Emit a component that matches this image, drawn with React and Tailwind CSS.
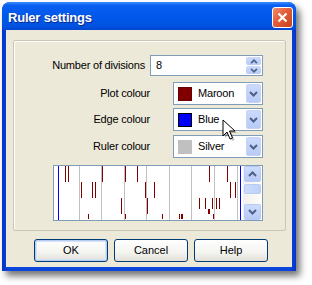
import React from 'react'

// dropdown / spinner arrow glyphs in the XP style
function Chevron({ up = false, w = 9, h = 6 }) {
  return (
    <svg width={w} height={h} viewBox="0 0 9 6">
      <path
        d={up ? 'M1 5 L4.5 1.5 L8 5' : 'M1 1 L4.5 4.5 L8 1'}
        fill="none"
        stroke="#4d6185"
        strokeWidth="2"
      />
    </svg>
  )
}

function ColourCombo({ swatch, swatchBorder, name }) {
  return (
    <div className="w-[90px] h-[23px] bg-white border border-[#7f9db9] flex items-center p-[1px]">
      <div className={`ml-[3px] w-[14px] h-[14px] ${swatch} ${swatchBorder}`} />
      <span className="ml-[6px] flex-1 text-[11px] tracking-[-0.2px] text-black">{name}</span>
      <div className="w-[15px] h-full rounded-[2px] border border-[#c4d3f6] bg-[linear-gradient(to_bottom,#cbdafc,#b8cbf7)] flex items-center justify-center">
        <Chevron />
      </div>
    </div>
  )
}

// the ruler preview: division lines and plotted marks
function RulerPreview() {
  const grey = [25, 47, 70, 92, 115, 137, 160, 183]
  const marks = [
    // row 1
    [11, 0, 16], [14, 0, 16], [48, 0, 16], [71, 0, 16], [83, 0, 16], [155, 0, 16], [173, 0, 16],
    // row 2
    [27, 16, 16], [38, 16, 16], [41, 16, 16], [91, 16, 16], [100, 16, 16], [176, 16, 16], [181, 16, 16],
    // row 3
    [67, 32, 16], [93, 32, 16], [145, 32, 11], [151, 32, 11], [158, 32, 11], [162, 32, 11], [165, 32, 11],
    // row 4
    [34, 48, 5], [71, 48, 5], [108, 48, 5], [125, 48, 5], [127, 48, 5], [128, 48, 5], [159, 48, 5],
  ]
  return (
    <svg width="189" height="54" viewBox="0 0 189 54" shapeRendering="crispEdges">
      <rect x="0" y="0" width="189" height="54" fill="#fff" />
      {grey.map((x) => (
        <rect key={x} x={x} y="0" width="1" height="54" fill="#c0c0c0" />
      ))}
      <rect x="4" y="0" width="1" height="54" fill="#0000ff" />
      <rect x="186" y="0" width="1" height="54" fill="#0000ff" />
      {marks.map(([x, y, h], i) => (
        <rect key={i} x={x} y={y} width="1" height={h} fill="#800000" />
      ))}
      <rect x="154" y="43" width="2" height="5" fill="#800000" />
    </svg>
  )
}

function XpButton({ children, isDefault }) {
  return (
    <button
      className={`w-[74px] h-[23px] rounded-[3px] border border-[#003c74] bg-[linear-gradient(to_bottom,#ffffff,#f3f3ef_60%,#e2e0d8)] text-[11px] text-black ${
        isDefault ? 'shadow-[inset_0_0_0_1px_#b7cef2,inset_0_0_0_2px_#d4e3f8]' : ''
      }`}
    >
      {children}
    </button>
  )
}

export default function App() {
  return (
    <div className="relative w-[312px] h-[285px] bg-white pt-[2px] pl-[2px] font-['Liberation_Sans',Arial,sans-serif] overflow-hidden">
      {/* Window */}
      <div className="w-[294px] h-[269px] flex flex-col rounded-t-[8px] bg-[#0a3fd0] shadow-[4px_5px_7px_rgba(0,0,0,0.55)]">
        {/* Title bar */}
        <div className="h-[28px] rounded-t-[8px] flex items-center justify-between pl-[6px] pr-[3px] bg-[linear-gradient(to_bottom,#3b8eff,#0a5ff0_12%,#0058ea_50%,#0053e2_85%,#0046cf)]">
          <span className="mt-[3px] text-[13px] font-bold tracking-[-0.2px] text-white [text-shadow:1px_1px_0_#0b2a8a]">
            Ruler settings
          </span>
          <div className="mt-[3px] w-[21px] h-[21px] rounded-[3px] border border-white bg-[linear-gradient(135deg,#f08d70,#e25d38_45%,#c8401c)] flex items-center justify-center">
            <svg width="11" height="11" viewBox="0 0 11 11">
              <path d="M1.5 1.5 L9.5 9.5 M9.5 1.5 L1.5 9.5" stroke="#fff" strokeWidth="2.2" />
            </svg>
          </div>
        </div>

        {/* Client area inside frame */}
        <div className="flex-1 px-[4px] pb-[4px] bg-[linear-gradient(to_right,#0832c8,#0a45dc_2%,#0a45dc_98%,#0832c8)]">
          <div className="h-full bg-[#ece9d8] pt-[10px] border-b-[0px]">
            {/* Group box */}
            <div className="ml-[7px] w-[273px] h-[191px] border border-[#c9c6b6] rounded-[2px] shadow-[inset_1px_1px_0_#fff] flex flex-col pr-[22px] pt-[14px]">
              <div className="flex items-center justify-end">
                <span className="text-[11px] tracking-[-0.2px] text-black">Number of divisions</span>
                <div className="ml-[5px] w-[113px] h-[21px] bg-white border border-[#7f9db9] flex items-center p-[1px]">
                  <span className="ml-[4px] flex-1 text-[11px] text-black">8</span>
                  <div className="w-[15px] h-full flex flex-col gap-[1px]">
                    <div className="flex-1 rounded-[2px] bg-[linear-gradient(to_bottom,#cbdafc,#b8cbf7)] flex items-center justify-center">
                      <Chevron up w={8} h={5} />
                    </div>
                    <div className="flex-1 rounded-[2px] bg-[linear-gradient(to_bottom,#cbdafc,#b8cbf7)] flex items-center justify-center">
                      <Chevron w={8} h={5} />
                    </div>
                  </div>
                </div>
              </div>

              <div className="mt-[6px] flex items-center justify-end">
                <span className="text-[11px] tracking-[-0.2px] text-black">Plot colour</span>
                <div className="ml-[23px]">
                  <ColourCombo swatch="bg-[#800000]" swatchBorder="border border-[#6a0000]" name="Maroon" />
                </div>
              </div>

              <div className="mt-[3px] flex items-center justify-end">
                <span className="text-[11px] tracking-[-0.2px] text-black">Edge colour</span>
                <div className="ml-[23px]">
                  <ColourCombo swatch="bg-[#0000ff]" swatchBorder="border border-black" name="Blue" />
                </div>
              </div>

              <div className="mt-[4px] flex items-center justify-end">
                <span className="text-[11px] tracking-[-0.2px] text-black">Ruler colour</span>
                <div className="ml-[23px]">
                  <ColourCombo swatch="bg-[#c0c0c0]" swatchBorder="" name="Silver" />
                </div>
              </div>

              {/* Ruler preview with scrollbar */}
              <div className="mt-[7px] self-end w-[210px] h-[56px] border border-[#7f9db9] bg-white flex">
                <RulerPreview />
                <div className="flex-1 flex flex-col bg-[linear-gradient(to_right,#f3f1ec,#fdfdfa)] py-[0px] px-[1px]">
                  <div className="h-[16px] rounded-[2px] border border-[#b8cbf5] bg-[linear-gradient(to_bottom,#cddcfd,#b6c9f6)] flex items-center justify-center">
                    <Chevron up />
                  </div>
                  <div className="mt-[2px] h-[10px] rounded-[2px] border border-[#b8cbf5] bg-[linear-gradient(to_right,#cddcfd,#bfd0f8)]" />
                  <div className="flex-1" />
                  <div className="h-[16px] rounded-[2px] border border-[#b8cbf5] bg-[linear-gradient(to_bottom,#cddcfd,#b6c9f6)] flex items-center justify-center">
                    <Chevron />
                  </div>
                </div>
              </div>
            </div>

            {/* Buttons */}
            <div className="mt-[8px] ml-[28px] flex gap-[6px]">
              <XpButton isDefault>OK</XpButton>
              <XpButton>Cancel</XpButton>
              <XpButton>Help</XpButton>
            </div>
          </div>
        </div>
      </div>

      {/* Mouse pointer over the Edge colour combo */}
      <svg className="absolute left-[222px] top-[119px]" width="16" height="24" viewBox="0 0 16 24">
        <path d="M3 3 L3 19 L7 15 L10 22 L12.5 21 L9.5 14 L15 14 Z" fill="rgba(0,0,0,0.25)" />
        <path d="M1 1 L1 17 L5 13 L8 20 L10.5 19 L7.5 12 L13 12 Z" fill="#fff" stroke="#000" strokeWidth="1" strokeLinejoin="round" />
      </svg>
    </div>
  )
}
